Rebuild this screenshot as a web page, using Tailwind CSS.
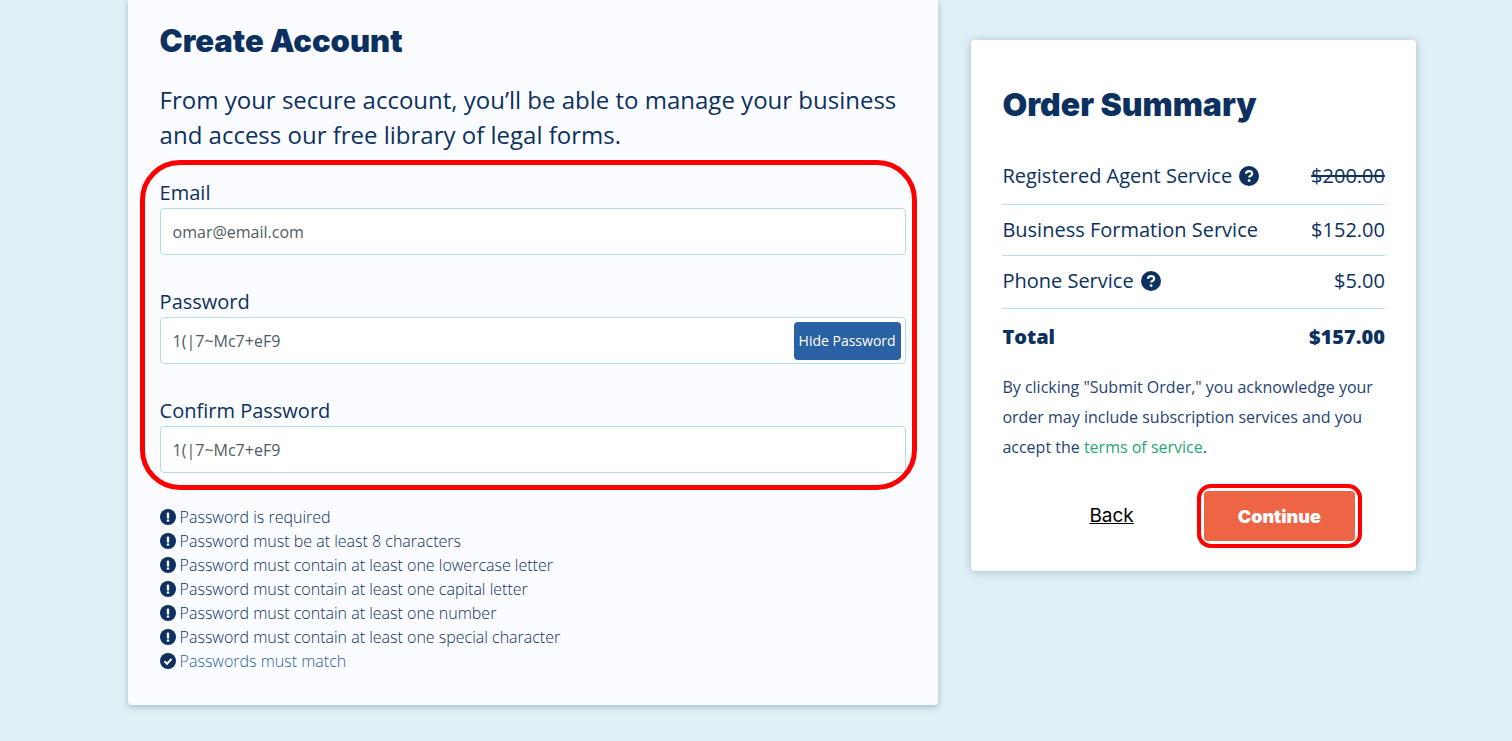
<!DOCTYPE html>
<html lang="en">
<head>
  <meta charset="UTF-8" />
  <meta name="viewport" content="width=device-width, initial-scale=1.0" />
  <title>Create Account</title>
  <script src="https://cdn.jsdelivr.net/npm/@tailwindcss/browser@4"></script>
</head>
<body class="bg-[#e0f0f7] h-[741px] overflow-hidden font-['Open_Sans',sans-serif] text-[#0c3160]">
  <div class="flex items-start pl-[127.6px] gap-[33px]">
    <!-- account form -->
    <main class="w-[810.8px] h-[705px] bg-[#fbfcff] rounded-b shadow-[0_2px_6px_rgba(40,90,120,0.35)] px-[32px] pt-[21px]">
      <h1 class="font-['Inter',sans-serif] font-black text-[31px] leading-[40px]">Create Account</h1>
      <p class="mt-[21px] text-[24px] leading-[35px]">From your secure account, you’ll be able to manage your business and access our free library of legal forms.</p>

      <div class="relative mt-[14px]">
        <div class="absolute left-[-20px] top-[-6px] w-[777px] h-[330px] border-[5px] border-[#ff0000] rounded-[40px] pointer-events-none"></div>
        <label class="block pt-[13px] mb-[2px] text-[20px] leading-[27px]">Email</label>
        <div class="w-[746px] h-[47px] bg-white border border-[#b9dbe6] rounded flex items-center px-[12px] text-[16px] text-[#4f5b66]">omar@email.com</div>

        <label class="block mt-[33px] mb-[2px] text-[20px] leading-[27px]">Password</label>
        <div class="w-[746px] h-[47px] bg-white border border-[#b9dbe6] rounded flex items-center justify-between pl-[12px] pr-[4px] text-[16px] text-[#4f5b66]">
          <span>1(|7~Mc7+eF9</span>
          <button class="w-[107px] h-[38px] bg-[#2a61a3] rounded text-white text-[14px]">Hide Password</button>
        </div>

        <label class="block mt-[33px] mb-[2px] text-[20px] leading-[27px]">Confirm Password</label>
        <div class="w-[746px] h-[47px] bg-white border border-[#b9dbe6] rounded flex items-center px-[12px] text-[16px] text-[#4f5b66]">1(|7~Mc7+eF9</div>
      </div>

      <ul class="mt-[32px] text-[16px] leading-[24px] font-light text-[#0c3160]">
        <li class="flex items-center gap-[4px]"><svg class="w-[16px] h-[16px]" viewBox="0 0 16 16"><circle cx="8" cy="8" r="8" fill="#0c3160"/><rect x="6.8" y="3.4" width="2.4" height="6" rx="1" fill="#fff"/><circle cx="8" cy="11.5" r="1.3" fill="#fff"/></svg>Password is required</li>
        <li class="flex items-center gap-[4px]"><svg class="w-[16px] h-[16px]" viewBox="0 0 16 16"><circle cx="8" cy="8" r="8" fill="#0c3160"/><rect x="6.8" y="3.4" width="2.4" height="6" rx="1" fill="#fff"/><circle cx="8" cy="11.5" r="1.3" fill="#fff"/></svg>Password must be at least 8 characters</li>
        <li class="flex items-center gap-[4px]"><svg class="w-[16px] h-[16px]" viewBox="0 0 16 16"><circle cx="8" cy="8" r="8" fill="#0c3160"/><rect x="6.8" y="3.4" width="2.4" height="6" rx="1" fill="#fff"/><circle cx="8" cy="11.5" r="1.3" fill="#fff"/></svg>Password must contain at least one lowercase letter</li>
        <li class="flex items-center gap-[4px]"><svg class="w-[16px] h-[16px]" viewBox="0 0 16 16"><circle cx="8" cy="8" r="8" fill="#0c3160"/><rect x="6.8" y="3.4" width="2.4" height="6" rx="1" fill="#fff"/><circle cx="8" cy="11.5" r="1.3" fill="#fff"/></svg>Password must contain at least one capital letter</li>
        <li class="flex items-center gap-[4px]"><svg class="w-[16px] h-[16px]" viewBox="0 0 16 16"><circle cx="8" cy="8" r="8" fill="#0c3160"/><rect x="6.8" y="3.4" width="2.4" height="6" rx="1" fill="#fff"/><circle cx="8" cy="11.5" r="1.3" fill="#fff"/></svg>Password must contain at least one number</li>
        <li class="flex items-center gap-[4px]"><svg class="w-[16px] h-[16px]" viewBox="0 0 16 16"><circle cx="8" cy="8" r="8" fill="#0c3160"/><rect x="6.8" y="3.4" width="2.4" height="6" rx="1" fill="#fff"/><circle cx="8" cy="11.5" r="1.3" fill="#fff"/></svg>Password must contain at least one special character</li>
        <li class="flex items-center gap-[4px] text-[#2a61a3]"><svg class="w-[16px] h-[16px]" viewBox="0 0 16 16"><circle cx="8" cy="8" r="8" fill="#0c3160"/><path d="M4.4 8.3 L7 10.8 L11.6 5.9" fill="none" stroke="#fff" stroke-width="2"/></svg>Passwords must match</li>
      </ul>
    </main>

    <!-- order summary -->
    <aside class="w-[444.6px] h-[531px] mt-[40px] bg-white rounded shadow-[0_1px_8px_rgba(40,90,120,0.35)] px-[31px] pt-[44px]">
      <h2 class="font-['Inter',sans-serif] font-black text-[32px] leading-[42px]">Order Summary</h2>

      <div class="mt-[21px] flex justify-between items-center h-[58px] border-b border-[#b9dfe8] text-[20px]">
        <span class="flex items-center gap-[7px]">Registered Agent Service
          <svg class="w-[20px] h-[20px]" viewBox="0 0 20 20"><circle cx="10" cy="10" r="10" fill="#0c3160"/><path d="M7 7.8 C7 4.2 13.2 4.2 13.2 7.7 C13.2 9.7 10.2 9.7 10.2 11.6" fill="none" stroke="#fff" stroke-width="2.2"/><circle cx="10.1" cy="14.6" r="1.4" fill="#fff"/></svg>
        </span>
        <span class="line-through">$200.00</span>
      </div>
      <div class="flex justify-between items-center h-[51px] border-b border-[#b9dfe8] text-[20px]">
        <span>Business Formation Service</span><span>$152.00</span>
      </div>
      <div class="flex justify-between items-center h-[53px] pb-[2px] border-b border-[#b9dfe8] text-[20px]">
        <span class="flex items-center gap-[7px]">Phone Service
          <svg class="w-[20px] h-[20px]" viewBox="0 0 20 20"><circle cx="10" cy="10" r="10" fill="#0c3160"/><path d="M7 7.8 C7 4.2 13.2 4.2 13.2 7.7 C13.2 9.7 10.2 9.7 10.2 11.6" fill="none" stroke="#fff" stroke-width="2.2"/><circle cx="10.1" cy="14.6" r="1.4" fill="#fff"/></svg>
        </span>
        <span>$5.00</span>
      </div>
      <div class="flex justify-between items-center h-[55px] text-[20px] font-extrabold">
        <span>Total</span><span>$157.00</span>
      </div>

      <p class="mt-[8px] text-[16px] leading-[30px] text-[#1f4373]">By clicking "Submit Order," you acknowledge your order may include subscription services and you accept the <a class="text-[#1fa67a]">terms of service</a>.</p>

      <div class="mt-[22px] flex items-center">
        <a class="ml-[87px] font-['Inter',sans-serif] text-[19px] text-black underline">Back</a>
        <div class="ml-[63px] w-[165px] h-[64px] rounded-[14px] border-[4px] border-[#ff0000] bg-white p-[3px]">
          <button class="w-full h-full bg-[#ee6545] rounded-sm text-white font-['Inter',sans-serif] font-black text-[18px]">Continue</button>
        </div>
      </div>
    </aside>
  </div>
</body>
</html>
